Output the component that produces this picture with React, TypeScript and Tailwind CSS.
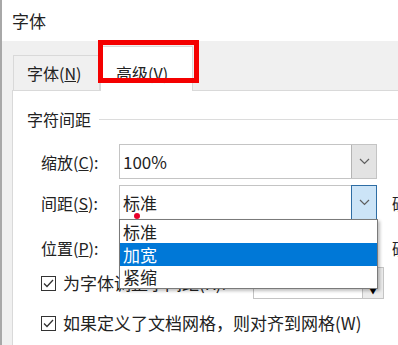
import React from "react";

function Chevron() {
  return (
    <svg width="11" height="7" viewBox="0 0 11 7" fill="none">
      <path d="M1 1l4.5 4.5L10 1" stroke="#5f5f5f" strokeWidth="1.2" />
    </svg>
  );
}

function CheckBox() {
  return (
    <div className="w-[15px] h-[15px] border border-[#333] bg-white flex items-center justify-center shrink-0">
      <svg width="11" height="9" viewBox="0 0 11 9" fill="none">
        <path d="M1 4.5l3 3L10 1" stroke="#333" strokeWidth="1.3" />
      </svg>
    </div>
  );
}

export default function App() {
  return (
    <div
      className="w-[398px] h-[345px] overflow-hidden relative bg-white border-l-2 border-[#a8a8a8] text-[#222]"
      style={{ fontFamily: '"Noto Sans CJK SC", "Noto Sans", sans-serif' }}
    >
      <div className="h-[41px] flex items-center pl-[10px] text-[17px]">字体</div>

      <div className="bg-[#f0f0f0] h-[304px] pl-[10px] flex flex-col">
        {/* tabs */}
        <div className="h-[49px] flex items-end shrink-0">
          <div className="ml-px w-[87px] h-[35px] border border-b-0 border-[#d9d9d9] flex items-center pl-[13px] text-[16px] leading-none">
            字体(<span className="underline">N</span>)
          </div>
          <div className="w-[93px] h-[45px] bg-white border border-b-0 border-[#d9d9d9] flex items-center pl-[15px] pt-[8px] text-[16px] leading-none relative z-10 -mb-px">
            高级(<span className="underline">V</span>)
          </div>
        </div>

        {/* panel */}
        <div className="flex-1 bg-white border-l border-t border-[#d9d9d9] text-[16px] whitespace-nowrap">
          <div className="flex items-center h-6 mt-[16px] pl-[14px]">
            <span>字符间距</span>
            <div className="flex-1 h-px bg-[#dcdcdc] ml-[8px]" />
          </div>

          <div className="flex items-center h-[35px] mt-[13px] pl-[28px]">
            <span className="w-[78px] shrink-0">
              缩放(<span className="underline">C</span>):
            </span>
            <div className="w-[258px] h-full shrink-0 flex border border-[#c4c4c4]">
              <div className="flex-1 flex items-center pl-[3px] text-[17px]">100%</div>
              <div className="w-[25px] bg-[#e3e3e3] border-l border-[#b4b4b4] flex items-center justify-center">
                <Chevron />
              </div>
            </div>
          </div>

          <div className="flex items-center h-[35px] mt-[6px] pl-[28px]">
            <span className="w-[78px] shrink-0">
              间距(<span className="underline">S</span>):
            </span>
            <div className="w-[258px] h-full shrink-0 flex border border-[#c4c4c4]">
              <div className="flex-1 flex items-center pl-[3px] text-[17px]">标准</div>
              <div className="w-[26px] -my-px -mr-px bg-[#cce4f7] border-[1.5px] border-[#2e6da4] flex items-center justify-center">
                <Chevron />
              </div>
            </div>
            <span className="ml-[15px]">磅</span>
          </div>

          <div className="flex items-center h-[35px] mt-[10px] pl-[28px]">
            <span className="w-[78px] shrink-0">
              位置(<span className="underline">P</span>):
            </span>
            <div className="w-[258px] h-full shrink-0" />
            <span className="ml-[15px]">磅</span>
          </div>

          <div className="flex items-center h-[32px] mt-[2px] pl-[28px]">
            <CheckBox />
            <span className="ml-[7px] text-[17px]">为字体调整字间距(K):</span>
            <div className="flex-1" />
            <div className="w-[131px] h-full mr-[14px] shrink-0 flex border border-[#c4c4c4] bg-white">
              <div className="flex-1" />
              <div className="w-[21px] bg-[#ececec] border-l border-[#c4c4c4] flex flex-col">
                <div className="flex-1" />
                <div className="flex-1 flex items-center justify-center text-[8px] text-black">▼</div>
              </div>
            </div>
          </div>

          <div className="flex items-center h-6 mt-[12px] pl-[28px]">
            <CheckBox />
            <span className="ml-[7px] text-[17px]">如果定义了文档网格，则对齐到网格(W)</span>
          </div>
        </div>
      </div>

      {/* open dropdown list */}
      <div className="absolute left-[117px] top-[219px] w-[259px] h-[70px] bg-white border border-[#7a7a7a] shadow-[2px_2px_3px_rgba(0,0,0,0.25)] flex flex-col text-[17px] z-20">
        <div className="h-[23px] flex items-center pl-[3px]">标准</div>
        <div className="h-[23px] flex items-center pl-[3px] bg-[#0078d7] text-white">加宽</div>
        <div className="h-[22px] flex items-center pl-[3px]">紧缩</div>
      </div>

      {/* red dot */}
      <div className="absolute left-[132px] top-[213px] w-[6px] h-[6px] rounded-full bg-[#e8002a] z-30" />

      {/* red highlight box */}
      <div className="absolute left-[96px] top-[40px] w-[101px] h-[43px] border-[5px] border-[#f40000] z-30" />
    </div>
  );
}
